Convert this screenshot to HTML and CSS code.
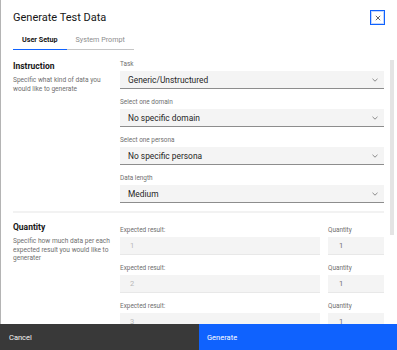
FILE: index.html
```html
<!DOCTYPE html>
<html lang="en">
<head>
<meta charset="utf-8">
<title>Generate Test Data</title>
<link rel="stylesheet" href="styles.css">
</head>
<body>
<div class="modal">
  <div class="header">
    <div class="title-row">
      <h1 class="title">Generate Test Data</h1>
      <button class="close" aria-label="Close">
        <svg width="6" height="6" viewBox="0 0 6 6"><path d="M0.8 0.8L5.2 5.2M5.2 0.8L0.8 5.2" stroke="#525252" stroke-width="0.9" fill="none"/></svg>
      </button>
    </div>
    <div class="tabs">
      <div class="tab tab-active">User Setup</div>
      <div class="tab">System Prompt</div>
    </div>
  </div>

  <div class="content">
    <section class="section">
      <div class="side">
        <h2 class="heading">Instruction</h2>
        <p class="desc">Specific what kind of data you<br>would like to generate</p>
      </div>
      <div class="fields">
        <div class="field">
          <div class="label">Task</div>
          <div class="select"><span>Generic/Unstructured</span><svg class="chev" width="6" height="4" viewBox="0 0 6 4"><path d="M0.5 0.8L3 3.2L5.5 0.8" stroke="#6f6f6f" stroke-width="0.8" fill="none"/></svg></div>
        </div>
        <div class="field">
          <div class="label">Select one domain</div>
          <div class="select"><span>No specific domain</span><svg class="chev" width="6" height="4" viewBox="0 0 6 4"><path d="M0.5 0.8L3 3.2L5.5 0.8" stroke="#6f6f6f" stroke-width="0.8" fill="none"/></svg></div>
        </div>
        <div class="field">
          <div class="label">Select one persona</div>
          <div class="select"><span>No specific persona</span><svg class="chev" width="6" height="4" viewBox="0 0 6 4"><path d="M0.5 0.8L3 3.2L5.5 0.8" stroke="#6f6f6f" stroke-width="0.8" fill="none"/></svg></div>
        </div>
        <div class="field">
          <div class="label">Data length</div>
          <div class="select"><span>Medium</span><svg class="chev" width="6" height="4" viewBox="0 0 6 4"><path d="M0.5 0.8L3 3.2L5.5 0.8" stroke="#6f6f6f" stroke-width="0.8" fill="none"/></svg></div>
        </div>
      </div>
    </section>

    <div class="divider"></div>

    <section class="section section-qty">
      <div class="side">
        <h2 class="heading">Quantity</h2>
        <p class="desc">Specific how much data per each expected result you would like to generater</p>
      </div>
      <div class="rows">
        <div class="row">
          <div class="field">
            <div class="label">Expected result:</div>
            <div class="input input-muted">1</div>
          </div>
          <div class="field">
            <div class="label">Quantity</div>
            <div class="input input-qty">1</div>
          </div>
        </div>
        <div class="row">
          <div class="field">
            <div class="label">Expected result:</div>
            <div class="input input-muted">2</div>
          </div>
          <div class="field">
            <div class="label">Quantity</div>
            <div class="input input-qty">1</div>
          </div>
        </div>
        <div class="row">
          <div class="field">
            <div class="label">Expected result:</div>
            <div class="input input-muted">3</div>
          </div>
          <div class="field">
            <div class="label">Quantity</div>
            <div class="input input-qty">1</div>
          </div>
        </div>
      </div>
    </section>
    <div class="scrollbar"></div>
  </div>

  <div class="footer">
    <button class="btn btn-secondary">Cancel</button>
    <button class="btn btn-primary">Generate</button>
  </div>
</div>
</body>
</html>
```

FILE: styles.css
```css
* { box-sizing: border-box; }
html, body { margin: 0; padding: 0; background: #fff; }
body {
  font-family: Roboto, "Liberation Sans", Arial, sans-serif;
  color: #161616;
  width: 397px;
  height: 350px;
  overflow: hidden;
}
.modal {
  display: flex;
  flex-direction: column;
  height: 350px;
  border-left: 1px solid #b4b4b4;
}
.header {
  padding: 10px 12px 0 12px;
}
.title-row {
  display: flex;
  justify-content: space-between;
  align-items: center;
  height: 15px;
}
.title {
  margin: 0;
  font-size: 11px;
  font-weight: 400;
  line-height: 15px;
  color: #161616;
}
.close {
  width: 15px;
  height: 15px;
  padding: 0;
  margin: 0 0 0 0;
  border: 1px solid #0f62fe;
  box-shadow: inset 0 0 0 1px #c4d6fc;
  background: #fff;
  display: flex;
  align-items: center;
  justify-content: center;
}
.tabs {
  display: flex;
  margin-top: 6px;
}
.tab {
  padding: 0 9px;
  height: 19px;
  line-height: 18px;
  font-size: 7.2px;
  color: #8d8d8d;
  border-bottom: 1px solid #c6c6c6;
}
.tab-active {
  color: #161616;
  font-weight: 700;
  border-bottom: 1px solid #0f62fe;
}
.content {
  flex: 1;
  overflow: hidden;
  position: relative;
  padding: 0 13px 0 12px;
}
.section {
  display: grid;
  grid-template-columns: 107px 1fr;
  padding-top: 10px;
}
.section-qty {
  padding-top: 8px;
}
.section-qty .rows {
  padding-top: 5px;
}
.side {
  padding-right: 0;
}
.heading {
  margin: 0;
  font-size: 8.5px;
  font-weight: 700;
  line-height: 12px;
  color: #161616;
}
.desc {
  margin: 4px 0 0 0;
  font-size: 6.6px;
  line-height: 8.5px;
  color: #6f6f6f;
}
.fields, .rows {
  display: flex;
  flex-direction: column;
  gap: 9px;
}
.field {
  display: flex;
  flex-direction: column;
}
.label {
  font-size: 6.4px;
  line-height: 8px;
  color: #6f6f6f;
  margin-bottom: 3px;
}
.select {
  height: 18px;
  background: #f4f4f4;
  border-bottom: 1px solid #8d8d8d;
  display: flex;
  align-items: center;
  justify-content: space-between;
  padding: 0 6px 0 8px;
  font-size: 8.4px;
  color: #262626;
}
.chev { display: block; }
.divider {
  height: 2px;
  background: #f2f2f2;
  margin-top: 8px;
}
.row {
  display: grid;
  grid-template-columns: 200px 56px;
  column-gap: 8px;
}
.input {
  height: 18px;
  background: #f4f4f4;
  border-bottom: 1px solid #e8e8e8;
  padding: 0 10px;
  display: flex;
  align-items: center;
  font-size: 7.5px;
}
.input-muted { color: #b8b8b8; }
.input-qty { color: #6f6f6f; padding-left: 11px; }
.scrollbar {
  position: absolute;
  right: 3px;
  top: 10px;
  width: 4px;
  height: 175px;
  background: #e4e4e4;
}
.footer {
  display: flex;
  height: 26px;
  margin-left: -1px;
}
.btn {
  flex: 1;
  border: 0;
  margin: 0;
  text-align: left;
  padding: 0 0 0 9px;
  font-family: inherit;
  font-size: 7.5px;
  color: #fff;
}
.btn-secondary { background: #393939; color: #f4f4f4; }
.btn-primary { background: #0f62fe; padding-left: 8px; }
```
